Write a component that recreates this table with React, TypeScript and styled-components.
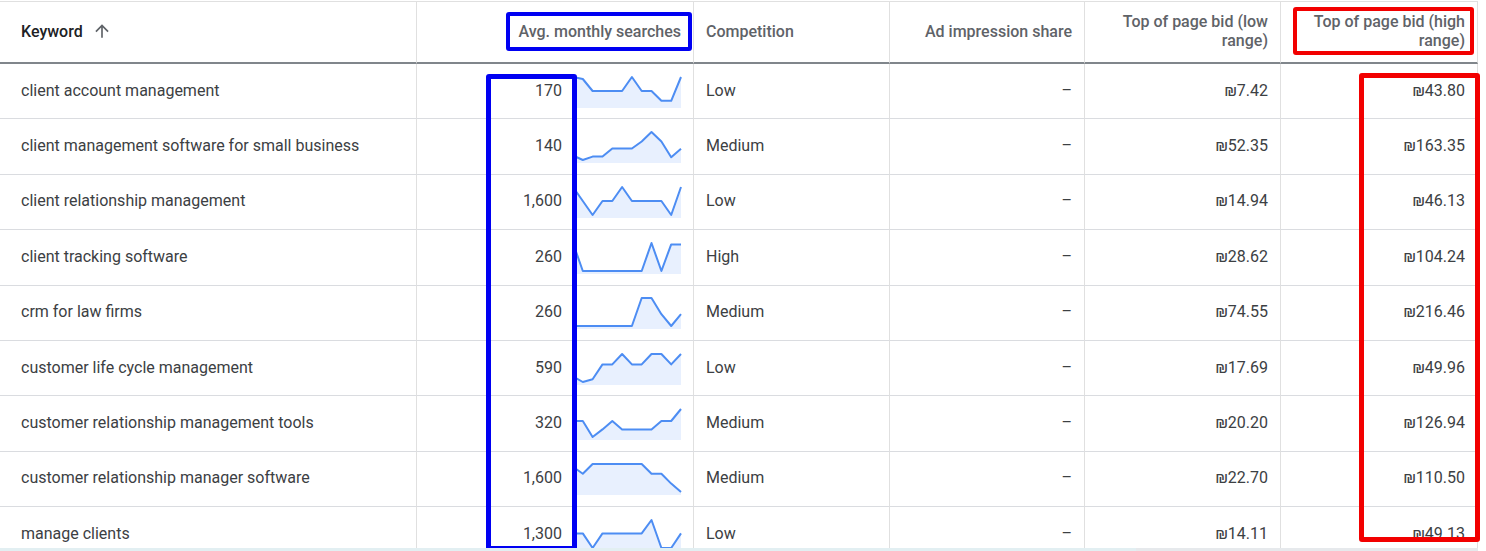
import { styled, createGlobalStyle } from 'styled-components';

const GlobalStyle = createGlobalStyle`
  html, body {
    margin: 0;
    padding: 0;
    background: #ffffff;
  }

  body {
    font-family: Roboto, 'Noto Sans', 'Liberation Sans', Arial, sans-serif;
    color: #3c4043;
    overflow: hidden;
  }
`;

type Trend = number[];

type KeywordRow = {
  keyword: string;
  searches: string;
  competition: string;
  lowBid: string;
  highBid: string;
  trend: Trend;
};

const rows: KeywordRow[] = [
  {
    keyword: 'client account management',
    searches: '170',
    competition: 'Low',
    lowBid: '₪7.42',
    highBid: '₪43.80',
    trend: [1, 0.93, 0.5, 0.5, 0.5, 0.5, 1, 0.5, 0.5, 0.15, 0.15, 1],
  },
  {
    keyword: 'client management software for small business',
    searches: '140',
    competition: 'Medium',
    lowBid: '₪52.35',
    highBid: '₪163.35',
    trend: [0.16, 0, 0.12, 0.12, 0.41, 0.41, 0.41, 0.66, 1, 0.66, 0.1, 0.4],
  },
  {
    keyword: 'client relationship management',
    searches: '1,600',
    competition: 'Low',
    lowBid: '₪14.94',
    highBid: '₪46.13',
    trend: [1, 0.5, 0, 0.5, 0.5, 1, 0.5, 0.5, 0.5, 0.5, 0, 1],
  },
  {
    keyword: 'client tracking software',
    searches: '260',
    competition: 'High',
    lowBid: '₪28.62',
    highBid: '₪104.24',
    trend: [1, 0, 0, 0, 0, 0, 0, 0, 1, 0, 0.95, 0.95],
  },
  {
    keyword: 'crm for law firms',
    searches: '260',
    competition: 'Medium',
    lowBid: '₪74.55',
    highBid: '₪216.46',
    trend: [0, 0, 0, 0, 0, 0, 0, 1, 1, 0.42, 0, 0.42],
  },
  {
    keyword: 'customer life cycle management',
    searches: '590',
    competition: 'Low',
    lowBid: '₪17.69',
    highBid: '₪49.96',
    trend: [0.2, 0, 0.1, 0.63, 0.63, 1, 0.63, 0.63, 1, 1, 0.63, 1],
  },
  {
    keyword: 'customer relationship management tools',
    searches: '320',
    competition: 'Medium',
    lowBid: '₪20.20',
    highBid: '₪126.94',
    trend: [0.57, 0.57, 0, 0.27, 0.57, 0.27, 0.27, 0.27, 0.27, 0.57, 0.57, 1],
  },
  {
    keyword: 'customer relationship manager software',
    searches: '1,600',
    competition: 'Medium',
    lowBid: '₪22.70',
    highBid: '₪110.50',
    trend: [0.9, 0.65, 1, 1, 1, 1, 1, 1, 0.65, 0.65, 0.3, 0],
  },
  {
    keyword: 'manage clients',
    searches: '1,300',
    competition: 'Low',
    lowBid: '₪14.11',
    highBid: '₪49.13',
    trend: [0.52, 0.52, 0, 0.52, 0.52, 0.52, 0.52, 0.52, 1, 0, 0, 0.52],
  },
];

const Page = styled.div`
  position: relative;
  padding-top: 1px;
  height: 550px;
  overflow: hidden;
`;

const Table = styled.div`
  display: grid;
  grid-template-columns: 417px 277px 196px 195px 196px 197px;
  grid-template-rows: 63px;
  grid-auto-rows: 55.4px;
  width: 1478px;
`;

const HeadCell = styled.div<{ $align?: 'left' | 'right' }>`
  box-sizing: border-box;
  display: flex;
  align-items: center;
  justify-content: ${(p) => (p.$align === 'left' ? 'flex-start' : 'flex-end')};
  padding: 0 12px 2px;
  border-top: 1px solid #e0e0e0;
  border-bottom: 2px solid #80868b;
  border-right: 1px solid #e0e0e0;
  color: #5f6368;
  font-size: 16px;
  font-weight: 500;
  line-height: 19px;
  text-align: ${(p) => p.$align ?? 'right'};
`;

const KeywordHead = styled(HeadCell)`
  padding-left: 21px;
  color: #202124;
  gap: 9px;
`;

const Cell = styled.div<{ $align?: 'left' | 'right' }>`
  box-sizing: border-box;
  display: flex;
  align-items: center;
  justify-content: ${(p) => (p.$align === 'right' ? 'flex-end' : 'flex-start')};
  padding: 0 12px 2px;
  border-bottom: 1px solid #dadce0;
  border-right: 1px solid #e0e0e0;
  font-size: 16px;
  color: #3c4043;
  white-space: nowrap;
`;

const KeywordCell = styled(Cell)`
  padding-left: 21px;
`;

const SearchesCell = styled(Cell)`
  gap: 11px;
  padding-bottom: 0;

  & > span {
    padding-bottom: 2px;
  }
`;

const SparkSvg = styled.svg`
  display: block;
  flex: none;
  overflow: visible;
`;

const Highlight = styled.div<{ $color: string; $width: number }>`
  position: absolute;
  box-sizing: border-box;
  border: ${(p) => p.$width}px solid ${(p) => p.$color};
  border-radius: 3px;
  pointer-events: none;
`;

const ScrollTrack = styled.div`
  position: absolute;
  left: 0;
  right: 8px;
  bottom: 0;
  height: 3px;
  background: #e6e9ec;
`;

const ScrollThumb = styled.div`
  width: 1136px;
  height: 100%;
  background: #e2eff2;
`;

const SPARK_W = 108;
const SPARK_H = 33;

const Sparkline = ({ trend }: { trend: Trend }) => {
  const step = SPARK_W / (trend.length - 1);
  const pts = trend.map((v, i) => `${(i * step).toFixed(1)},${(2 + (1 - v) * 28).toFixed(1)}`);
  const area = `${pts.join(' ')} ${SPARK_W},${SPARK_H} 0,${SPARK_H}`;

  return (
    <SparkSvg width={SPARK_W} height={SPARK_H} viewBox={`0 0 ${SPARK_W} ${SPARK_H}`}>
      <polygon points={area} fill="#e8f0fe" />
      <polyline
        points={pts.join(' ')}
        fill="none"
        stroke="#4d8df3"
        strokeWidth={2}
        strokeLinejoin="round"
      />
    </SparkSvg>
  );
};

const ArrowUp = () => (
  <svg width="20" height="20" viewBox="0 0 24 24" fill="#5f6368">
    <path d="M4 12l1.41 1.41L11 7.83V20h2V7.83l5.58 5.59L20 12l-8-8-8 8z" />
  </svg>
);

const App = () => {
  return (
    <Page>
      <GlobalStyle />
      <Table>
        <KeywordHead $align="left">
          Keyword
          <ArrowUp />
        </KeywordHead>
        <HeadCell>Avg. monthly searches</HeadCell>
        <HeadCell $align="left">Competition</HeadCell>
        <HeadCell>Ad impression share</HeadCell>
        <HeadCell>
          Top of page bid (low
          <br />
          range)
        </HeadCell>
        <HeadCell>
          Top of page bid (high
          <br />
          range)
        </HeadCell>

        {rows.map((row) => (
          <>
            <KeywordCell key={`${row.keyword}-k`}>{row.keyword}</KeywordCell>
            <SearchesCell $align="right">
              <span>{row.searches}</span>
              <Sparkline trend={row.trend} />
            </SearchesCell>
            <Cell>{row.competition}</Cell>
            <Cell $align="right">–</Cell>
            <Cell $align="right">{row.lowBid}</Cell>
            <Cell $align="right">{row.highBid}</Cell>
          </>
        ))}
      </Table>

      <Highlight $color="#0000f2" $width={4} style={{ left: 506, top: 12, width: 186, height: 39 }} />
      <Highlight $color="#0000f2" $width={5} style={{ left: 486, top: 74, width: 91, height: 477 }} />
      <Highlight $color="#f20000" $width={4} style={{ left: 1293, top: 7, width: 181, height: 48 }} />
      <Highlight $color="#f20000" $width={5} style={{ left: 1359, top: 73, width: 121, height: 469 }} />

      <ScrollTrack>
        <ScrollThumb />
      </ScrollTrack>
    </Page>
  );
};

export default App;
